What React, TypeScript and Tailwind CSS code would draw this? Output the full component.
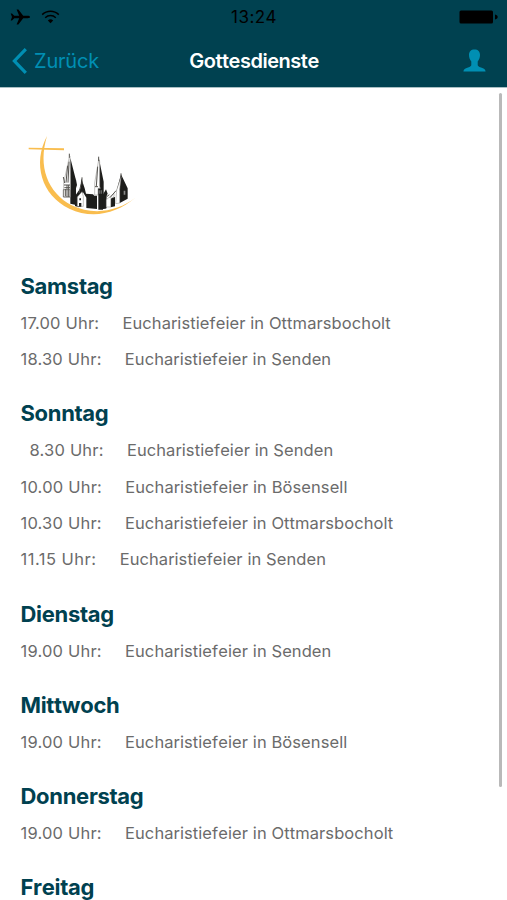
import React from "react";

type Service = { time: string; place: string; timeClass?: string };

const days: { name: string; services: Service[] }[] = [
  {
    name: "Samstag",
    services: [
      { time: "17.00 Uhr:", place: "Ottmarsbocholt" },
      { time: "18.30 Uhr:", place: "Senden" },
    ],
  },
  {
    name: "Sonntag",
    services: [
      { time: "8.30 Uhr:", place: "Senden", timeClass: "pl-[9px] tracking-[0.200px]" },
      { time: "10.00 Uhr:", place: "Bösensell" },
      { time: "10.30 Uhr:", place: "Ottmarsbocholt" },
      { time: "11.15 Uhr:", place: "Senden", timeClass: "tracking-[0.480px]" },
    ],
  },
  { name: "Dienstag", services: [{ time: "19.00 Uhr:", place: "Senden" }] },
  { name: "Mittwoch", services: [{ time: "19.00 Uhr:", place: "Bösensell" }] },
  {
    name: "Donnerstag",
    services: [{ time: "19.00 Uhr:", place: "Ottmarsbocholt" }],
  },
  { name: "Freitag", services: [] },
];

const StatusBar = () => (
  <div className="grid h-[34px] grid-cols-3 items-center pl-[10px] pr-[9px] text-black">
    <div className="flex items-center gap-[11px]">
      <svg width="20" height="16" viewBox="0 0 20 16" fill="currentColor">
        <path d="M20 8c0-.8-1-1.200-2.200-1.200h-4.600L8.400.6H6.600l2.600 6.200H4.300L2 4.600H.7L2 8 .7 11.400H2l2.300-2.200h4.900l-2.600 6.200h1.800l4.800-6.200h4.600C19 9.200 20 8.800 20 8z" />
      </svg>
      <svg width="19" height="14" viewBox="0 0 19 14" fill="none" stroke="currentColor" strokeWidth="1.500">
        <path d="M1.200 4.600a12 12 0 0 1 16.600 0" />
        <path d="M4.200 7.700a7.700 7.700 0 0 1 10.600 0" />
        <path d="M9.500 13.300 6.800 10.500a4 4 0 0 1 5.400 0z" fill="currentColor" stroke="none" />
      </svg>
    </div>
    <div className="pt-[2px] text-center text-[17px] tracking-[0.500px]">13:24</div>
    <svg className="justify-self-end" width="39" height="14" viewBox="0 0 39 14" fill="currentColor">
      <rect x="0.500" y="0.500" width="33.500" height="13" rx="1.500" />
      <path d="M36 4.500c2 .5 2.700 1.500 2.700 2.500S38 9 36 9.500z" />
    </svg>
  </div>
);

const NavBar = () => (
  <div className="grid h-[53px] grid-cols-3 items-center pl-3 pr-[21px]">
    <button className="flex items-center gap-[7px] text-left text-[20px] tracking-[-0.200px] text-[#008fb3]">
      <svg width="15" height="26" viewBox="0 0 15 26" fill="none" stroke="currentColor" strokeWidth="3.200">
        <path d="M13.800 1.200 2.400 13l11.400 11.800" />
      </svg>
      Zurück
    </button>
    <h1 className="pl-[10px] text-center text-[20px] font-semibold tracking-[-0.480px] text-white [font-kerning:none]">
      Gottesdienste
    </h1>
    <svg className="justify-self-end" width="23" height="23" viewBox="0 0 23 23" fill="#008fb3">
      <path d="M11.500.5c3.500 0 5.500 2 5.500 5.500 0 2.600-.8 4.700-2.300 6.500v3.200c0 1.400 1 2 3.300 2.800 3 1 4.300 1.700 4.600 4H.4c.3-2.300 1.600-3 4.600-4 2.300-.8 3.300-1.400 3.300-2.800v-3.200C6.800 10.700 6 8.600 6 6 6 2.500 8 .5 11.500.5z" />
    </svg>
  </div>
);

// Parish logo: cross drawn as a sweeping arc under the church towers
const Logo = () => (
  <svg width="135" height="100" viewBox="0 0 405 300">
    <path
      d="M96 33C52 115 79 211 163 251C230 283 303 268 363 217C306 262 232 271 170 241C98 202 68 125 96 33Z"
      fill="#f9bd4e"
    />
    <path d="M41 68Q94 69 147 70V76Q92 74 41 73Z" fill="#f9bd4e" />
    <g fill="#1d1d1b">
      <path d="M163 87 183 166V240L166 236V96z" />
      <path d="M182 158l4 22-3 10z" />
      <path d="M251 97 266 170V226L274 205V250L260 253V195L251 180z" />
      <path d="M199 160 209 190 213 206 234 208 238 212 246 212V252L214 249V218L204 202 192 214V247L180 243V213L196 190z" />
      <path d="M246 190H264V254H250V212z" />
      <path d="M273 193 278 206 274 214V250L263 252V210z" />
      <path d="M288 219 300 216V244L287 247z" />
      <path d="M318 148 338 190V221L313 235V196L305 196z" />
    </g>
    <g fill="#fff" stroke="#8a8884" strokeWidth="1.500">
      <path d="M163 96 146 174V216H166V172L165 100z" />
      <path d="M251 105 239 174V210H249V190H254V110z" />
      <path d="M201 200 187 216V244H205V214z" />
      <path d="M274 224 297 205V215L287 221V246H274z" />
      <path d="M318 156 305 195 302 236 314 234V194z" />
    </g>
    <g stroke="#55534f" fill="none">
      <path d="M163 86V98M251 95V108M201 157V178M318 145V160" strokeWidth="3" />
      <path d="M145 156l4 18M147 180H165M158 122 153 173M162 110 159 173M148 188H165M151 192V214M156 180V216M161 180V216M248 125 244 184M240 185H249" strokeWidth="3" />
      <path d="M145 194H165V216H145z" strokeWidth="2" />
      <path d="M285 218 303 197M283 209 274 216M198 178 192 204" strokeWidth="3" />
    </g>
    <path d="M326 197h5v12h-5zM251 196h3v10h-3zM257 196h3v10h-3z" fill="#888" />
    <path d="M193 220h5v6h-5zM192 234h7v11h-7z" fill="#1d1d1b" />
  </svg>
);

const App = () => {
  return (
    <div className="flex h-[900px] w-[507px] flex-col overflow-hidden bg-white font-['Inter',sans-serif]">
      <header className="h-[87px] shrink-0 bg-[#004150]">
        <StatusBar />
        <NavBar />
      </header>
      <div className="h-px shrink-0 bg-[#a9bfc4]" />

      <div className="flex min-h-0 flex-1 justify-between overflow-hidden">
        <main className="pl-[20.500px]">
          <div className="-ml-[5.500px] h-[161.600px] pt-[37px]">
            <Logo />
          </div>
          {days.map((day) => (
            <section key={day.name}>
              <h2 className="pt-[18.200px] text-[22px] leading-[36.600px] font-bold tracking-[-0.300px] text-[#004150] [font-kerning:none]">
                {day.name}
              </h2>
              {day.services.map((service) => (
                <div
                  key={service.time}
                  className="flex h-[36.400px] items-center gap-[23.200px] pt-px text-[16.500px] whitespace-nowrap text-[#6b6b6b]"
                >
                  <span className={service.timeClass ?? "tracking-[0.200px]"}>
                    {service.time}
                  </span>
                  <span className="tracking-[0.090px] [font-kerning:none]">
                    Eucharistiefeier in {service.place}
                  </span>
                </div>
              ))}
            </section>
          ))}
        </main>
        {/* Scroll indicator */}
        <div className="mt-[5px] mr-[5px] h-[694px] w-[3px] shrink-0 rounded-full bg-[#b9b9b9]" />
      </div>
    </div>
  );
};

export default App;
